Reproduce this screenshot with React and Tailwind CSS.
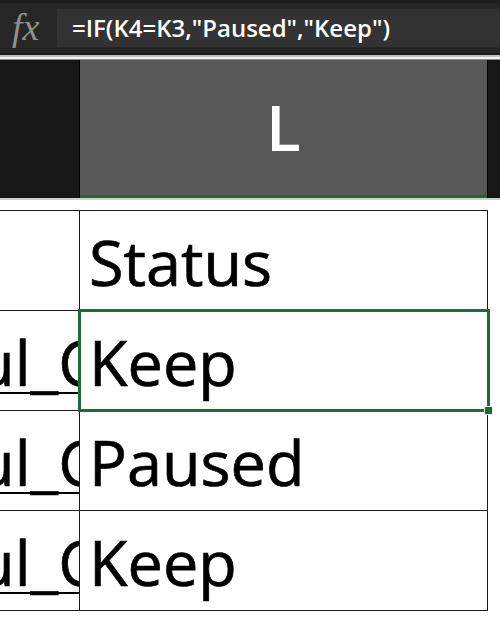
import React from "react";

const rows = [
  { k: "", l: "Status" },
  { k: "ul_C", l: "Keep", selected: true },
  { k: "ul_C", l: "Paused" },
  { k: "ul_C", l: "Keep" },
];

function FormulaBar() {
  return (
    <div className="h-[55px] flex items-center bg-[#262626] border-t-[3px] border-b-2 border-[#1b1b1b]">
      <div className="w-[57px] shrink-0 pl-[12px] pb-[2px] text-[38px] leading-none italic text-[#8f8f8f] font-['Liberation_Serif',serif]">
        fx
      </div>
      <div className="flex-1 h-[38px] flex items-center pl-[15px] bg-[#333333] text-white text-[24px] font-semibold font-['Open_Sans',sans-serif]">
        =IF(K4=K3,"Paused","Keep")
      </div>
    </div>
  );
}

function ColumnHeaders() {
  return (
    <>
      <div className="h-[5px] bg-[#f2f2f2] border-t-2 border-b border-t-[#bfbfbf] border-b-[#8c8c8c]" />
      <div className="flex h-[138px]">
        <div className="w-[80px] shrink-0 bg-[#171717] border-r border-black" />
        <div className="w-[407px] shrink-0 bg-[#585858] border-b-[3px] border-[#1b6b32] flex items-center justify-center pb-[2px] text-white text-[64px] leading-none font-semibold font-['Open_Sans',sans-serif]">
          L
        </div>
        <div className="flex-1 bg-[#171717] border-l border-black" />
      </div>
    </>
  );
}

function Row({ row, last }) {
  return (
    <div className={`relative flex border-t border-[#1a1a1a] w-[488px] ${last ? "border-b h-[101px]" : "h-[100px]"}`}>
      <div className="w-[80px] shrink-0 overflow-hidden border-r border-[#1a1a1a] flex items-end pb-[17px]">
        <span className="-ml-[24px] whitespace-nowrap underline decoration-2 underline-offset-[6px] text-[63px] leading-none text-black [-webkit-text-stroke:0.7px_#000] font-['Open_Sans',sans-serif]">
          {row.k}
        </span>
      </div>
      <div className="flex-1 border-r border-[#1a1a1a] flex items-end pl-[9px] pb-[17px] text-[63px] leading-none text-black [-webkit-text-stroke:0.7px_#000] font-['Open_Sans',sans-serif]">
        {row.l}
      </div>
      {row.selected && (
        <div className="absolute z-10 left-[78px] top-[-2px] w-[412px] h-[103px] border-[3px] border-[#1e6b3a] pointer-events-none">
          <div className="absolute right-[-6px] bottom-[-6px] w-[9px] h-[9px] bg-[#1e6b3a] border border-[#e8efe9]" />
        </div>
      )}
    </div>
  );
}

export default function App() {
  return (
    <div className="w-[500px] h-[622px] overflow-hidden bg-white">
      <FormulaBar />
      <ColumnHeaders />
      <div className="h-[12px] border-t-2 border-[#d0d0d0]" />
      {rows.map((row, i) => (
        <Row key={i} row={row} last={i === rows.length - 1} />
      ))}
    </div>
  );
}
